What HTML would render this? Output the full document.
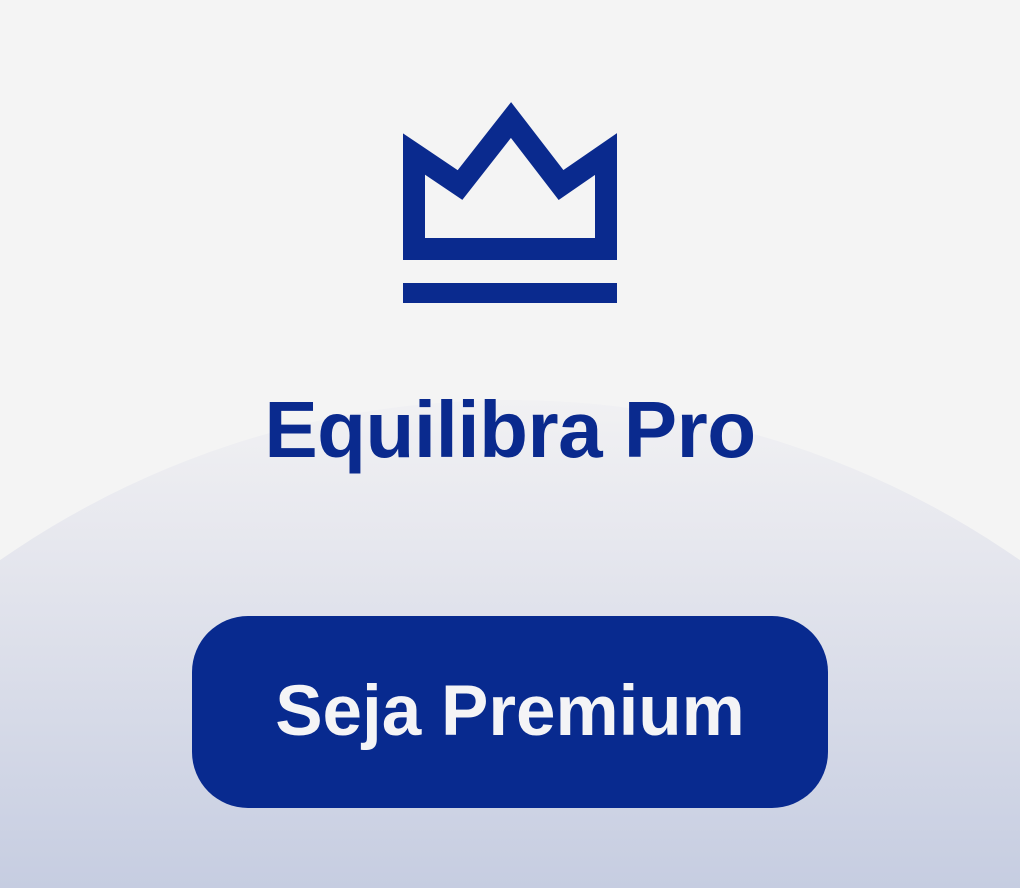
<!DOCTYPE html>
<html><head><style>
html,body{margin:0;padding:0;width:1020px;height:888px;overflow:hidden;background:#f4f4f4;font-family:"Liberation Sans",sans-serif;}
.w{position:relative;width:1020px;height:888px;overflow:hidden;background:#f4f4f4;}
.t{position:absolute;left:0;width:1020px;top:384px;text-align:center;font-size:80px;font-weight:bold;color:#0a2a8e;letter-spacing:-0.5px;}
.b{position:absolute;left:192px;top:616px;width:636px;height:192px;border-radius:56px;background:#082a8f;color:#f4f4f6;font-size:71px;font-weight:bold;text-align:center;line-height:192px;}
</style></head><body>
<div class="w">
<svg style="position:absolute;left:0;top:0" width="1020" height="888">
<defs><linearGradient id="g" x1="0" y1="400" x2="0" y2="888" gradientUnits="userSpaceOnUse">
<stop offset="0" stop-color="#f1f1f3"/><stop offset="0.3" stop-color="#e6e7ee"/><stop offset="1" stop-color="#c6cde1"/></linearGradient></defs>
<circle cx="510" cy="1292" r="892" fill="url(#g)"/>
<path d="M414,154 L460,185 L511,120 L561,185 L606,154 L606,249 L414,249 Z" fill="none" stroke="#0a2a8e" stroke-width="22" stroke-linejoin="miter" stroke-miterlimit="10"/>
<rect x="403" y="283" width="214" height="20" fill="#0a2a8e"/>
</svg>
<div class="t">Equilibra Pro</div>
<div class="b">Seja Premium</div>
</div>
</body></html>
